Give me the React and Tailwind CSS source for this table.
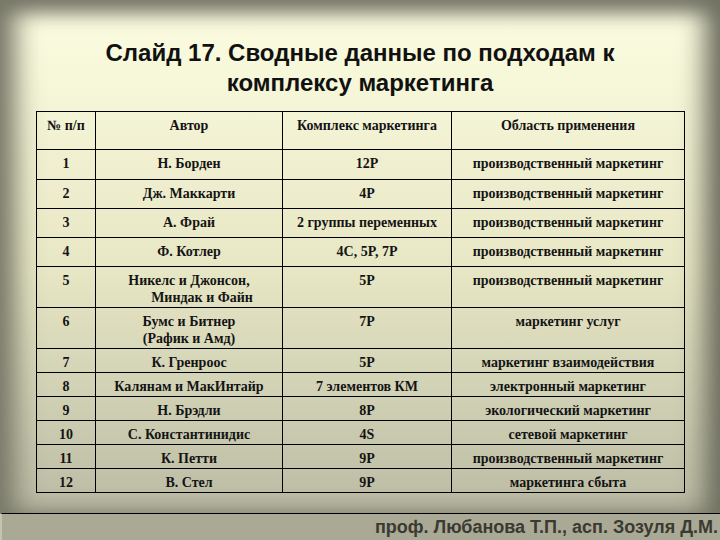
const rows = [
  { n: "1", a: ["Н. Борден"], c: "12P", o: "производственный маркетинг", h: "h-[30px]" },
  { n: "2", a: ["Дж. Маккарти"], c: "4P", o: "производственный маркетинг", h: "h-[29px]" },
  { n: "3", a: ["А. Фрай"], c: "2 группы переменных", o: "производственный маркетинг", h: "h-[29px]" },
  { n: "4", a: ["Ф. Котлер"], c: "4C, 5P, 7P", o: "производственный маркетинг", h: "h-[29px]" },
  { n: "5", a: ["Никелс и Джонсон,", "Миндак и Файн"], c: "5P", o: "производственный маркетинг", h: "h-[41px]", indent: true },
  { n: "6", a: ["Бумс и Битнер", "(Рафик и Амд)"], c: "7P", o: "маркетинг услуг", h: "h-[41px]" },
  { n: "7", a: ["К. Гренроос"], c: "5P", o: "маркетинг взаимодействия", h: "h-[24px]" },
  { n: "8", a: ["Калянам и МакИнтайр"], c: "7 элементов КМ", o: "электронный маркетинг", h: "h-[24px]" },
  { n: "9", a: ["Н. Брэдли"], c: "8P", o: "экологический маркетинг", h: "h-[24px]" },
  { n: "10", a: ["С. Константинидис"], c: "4S", o: "сетевой маркетинг", h: "h-[24px]" },
  { n: "11", a: ["К. Петти"], c: "9P", o: "производственный маркетинг", h: "h-[24px]" },
  { n: "12", a: ["В. Стел"], c: "9P", o: "маркетинга сбыта", h: "h-[24px]" },
];

const cell =
  "border border-black align-top text-center pt-[5px] leading-[17px] font-bold text-[14px] font-['Liberation_Serif','Times_New_Roman',serif]";

const App = () => {
  return (
    <div className="w-[720px] h-[540px] overflow-hidden flex flex-col bg-gradient-to-b from-[#fdfde2] via-[#e7e7c5] to-[#b6b6a1]">
      <div className="flex-1 flex flex-col shadow-[inset_22px_0_26px_-6px_rgba(120,120,104,0.95),inset_-22px_0_26px_-6px_rgba(110,110,96,0.95),inset_0_16px_20px_-4px_rgba(120,120,106,0.95)]">
        {/* Title */}
        <div className="pt-[38px] text-center text-[24px] leading-[30px] font-bold text-[#111] font-['Liberation_Sans',Arial,sans-serif]">
          <div>Слайд 17. Сводные данные по подходам к</div>
          <div>комплексу маркетинга</div>
        </div>

        {/* Table */}
        <div className="mt-[13px] pl-[36px]">
          <table className="border-collapse table-fixed text-[#141414] font-['Liberation_Serif','Times_New_Roman',serif]">
            <colgroup>
              <col className="w-[59px]" />
              <col className="w-[187px]" />
              <col className="w-[169px]" />
              <col className="w-[233px]" />
            </colgroup>
            <thead>
              <tr className="h-[38px]">
                <th className={cell}>№ п/п</th>
                <th className={cell}>Автор</th>
                <th className={cell}>Комплекс маркетинга</th>
                <th className={cell}>Область применения</th>
              </tr>
            </thead>
            <tbody>
              {rows.map((r) => (
                <tr key={r.n} className={r.h}>
                  <td className={cell}>{r.n}</td>
                  <td className={cell}>
                    {r.a.map((line, i) => (
                      <div key={i} className={r.indent && i === 1 ? "pl-[26px]" : ""}>
                        {line}
                      </div>
                    ))}
                  </td>
                  <td className={cell}>{r.c}</td>
                  <td className={cell}>{r.o}</td>
                </tr>
              ))}
            </tbody>
          </table>
        </div>
      </div>

      {/* Footer */}
      <div className="h-[27px] border-t border-black bg-[#a9a996] flex items-center justify-end pr-[2px] border-l-2 border-l-[#c4c4b2]">
        <span className="text-[18px] font-bold text-[#3a3a31] leading-none font-['Liberation_Sans',Arial,sans-serif]">
          проф. Любанова Т.П., асп. Зозуля Д.М.
        </span>
      </div>
    </div>
  );
};

export default App;
